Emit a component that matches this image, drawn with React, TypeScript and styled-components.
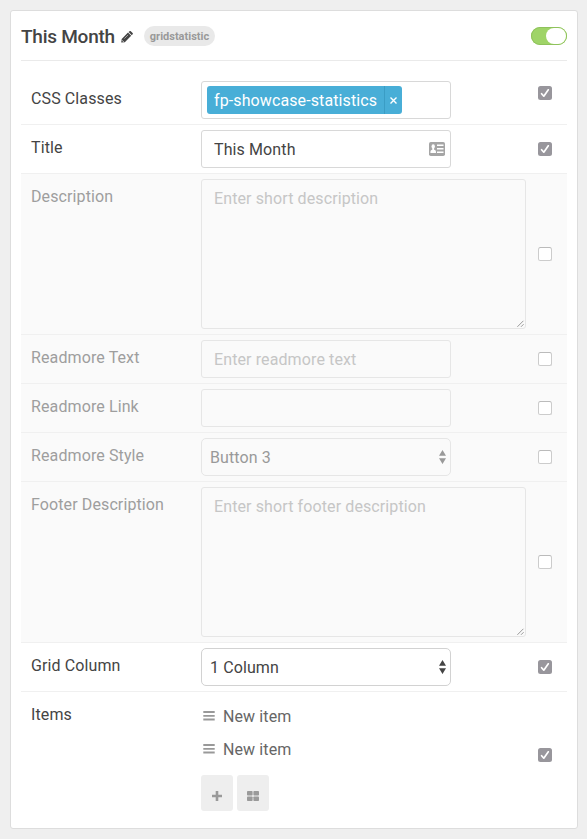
import React from 'react';
import styled, { createGlobalStyle } from 'styled-components';

const Global = createGlobalStyle`
  *, *::before, *::after { box-sizing: border-box; }
  body {
    margin: 0;
    background: #efefef;
    font: 400 16px/24px Roboto, sans-serif;
    letter-spacing: 0.11px;
    color: #444;
  }
  input, textarea, select, button { font: inherit; letter-spacing: inherit; color: inherit; margin: 0; }
`;

const Card = styled.main`
  width: 568px;
  height: 819px;
  margin: 10px;
  padding: 0 10px;
  background: #fff;
  border: 1px solid #ddd;
  border-radius: 3px;
`;

const Header = styled.header`
  display: flex;
  align-items: center;
  height: 50px;
  border-bottom: 1px solid #eaeaea;
`;

const Heading = styled.h1`
  width: 93px;
  margin: 2px 0 0;
  font-size: 19px;
  line-height: 24px;
  font-weight: 500;
  letter-spacing: -0.25px;
  white-space: nowrap;
`;

const Pencil = styled.svg`
  width: 12px;
  height: 12px;
  margin: 3px 0 0 7px;
  fill: #444;
`;

const Badge = styled.span`
  width: 71px;
  height: 20px;
  margin-left: 11px;
  border-radius: 10px;
  background: #e9e9e9;
  color: #999;
  text-align: center;
  font-size: 11px;
  line-height: 21px;
  font-weight: 700;
  letter-spacing: 0;
`;

const Toggle = styled.button`
  display: flex;
  justify-content: flex-end;
  width: 36px;
  height: 18px;
  margin-left: auto;
  padding: 1px;
  border: 0;
  border-radius: 9px;
  background: #9fd468;
  box-shadow: inset 0 0 0 1px #8fc25c;
`;

const Knob = styled.span`
  width: 20px;
  height: 16px;
  border-radius: 8px;
  background: #fff;
`;

const Row = styled.div<{ $off?: boolean; $first?: boolean; $last?: boolean }>`
  display: grid;
  grid-template-columns: 170px 1fr 14px;
  align-items: start;
  padding: ${p => (p.$first ? 20 : 5)}px 15px ${p => (p.$last ? 9 : 5)}px 10px;
  border-bottom: ${p => (p.$last ? 0 : '1px solid #f0f0f0')};
  background: ${p => (p.$off ? '#fafafa' : '#fff')};
`;

const Label = styled.label<{ $off?: boolean }>`
  padding-top: 6px;
  color: ${p => (p.$off ? '#9e9e9e' : '#444')};
`;

const CheckCell = styled.div<{ $shift?: number }>`
  display: flex;
  align-self: center;
  margin-top: ${p => p.$shift ?? 0}px;
`;

const Box = styled.span<{ $on?: boolean }>`
  display: flex;
  width: 14px;
  height: 14px;
  border-radius: 2.5px;
  border: ${p => (p.$on ? 0 : '1px solid #ccc')};
  border-top-color: #bbb;
  background: ${p => (p.$on ? '#98969c' : '#fff')};
`;

const Field = styled.input<{ $off?: boolean }>`
  display: block;
  width: 250px;
  height: 38px;
  padding: 0 12px;
  border: 1px solid ${p => (p.$off ? '#e6e6e6' : '#d8d8d8')};
  border-radius: 3px;
  outline: 0;
  background: ${p => (p.$off ? '#fafafa' : '#fff')};
  &::placeholder { color: #c6c6c6; opacity: 1; }
`;

const Over = styled.div<{ $w: number }>`
  position: relative;
  width: ${p => p.$w}px;
`;

const Area = styled.textarea`
  display: block;
  width: 325px;
  height: 150px;
  padding: 7px 12px;
  border: 1px solid #e6e6e6;
  border-radius: 3px;
  background: #fafafa;
  resize: none;
  outline: 0;
  &::placeholder { color: #c6c6c6; opacity: 1; }
`;

const Grip = styled.svg`
  position: absolute;
  right: 1px;
  bottom: 1px;
  width: 8px;
  height: 8px;
  fill: none;
  stroke: #999;
`;

const CardIcon = styled.svg`
  position: absolute;
  right: 6px;
  top: 12px;
  width: 16px;
  height: 14px;
`;

const TagField = styled.div`
  display: flex;
  width: 250px;
  height: 38px;
  padding: 4px 5px;
  border: 1px solid #d8d8d8;
  border-radius: 3px;
`;

const Tag = styled.span`
  display: flex;
  width: 195px;
  height: 28px;
  border-radius: 3px;
  background: #48aed7;
  color: #fff;
  line-height: 29px;
`;

const TagText = styled.span`
  width: 177px;
  padding-left: 7px;
  white-space: nowrap;
`;

const TagClose = styled.span`
  display: flex;
  align-items: center;
  justify-content: center;
  flex: 1;
  padding-top: 1px;
  border-left: 1px solid #3a9dc5;
`;

const Select = styled.select<{ $off?: boolean }>`
  display: block;
  appearance: none;
  width: 250px;
  height: 38px;
  padding: 1px 8px 0;
  border: 1px solid ${p => (p.$off ? '#e6e6e6' : '#d2d2d2')};
  border-radius: 5px;
  outline: 0;
  background: ${p => (p.$off ? '#fafafa' : '#fff')};
  color: ${p => (p.$off ? '#999' : '#444')};
`;

const Arrows = styled.svg<{ $off?: boolean }>`
  position: absolute;
  right: 5px;
  top: 12px;
  width: 7px;
  height: 14px;
  fill: ${p => (p.$off ? '#999' : '#444')};
`;

const Items = styled.ul`
  margin: 0;
  padding: 8px 0 0;
  list-style: none;
`;

const Item = styled.li`
  display: flex;
  align-items: center;
  height: 24px;
  margin-bottom: 9px;
  padding-left: 2px;
  color: #666;
`;

const Bars = styled.svg`
  width: 12px;
  height: 10px;
  margin: -2px 8px 0 0;
  fill: #999;
`;

const Buttons = styled.div`
  display: flex;
  gap: 4px;
  margin-top: 4px;
  padding-top: 4px;
`;

const IconButton = styled.button`
  width: 32px;
  height: 36px;
  padding: 6px 0 0;
  border: 0;
  border-radius: 3px;
  background: #eee;
  display: flex;
  align-items: center;
  justify-content: center;
  svg { fill: #9a9a9a; display: block; }
`;

const Check = ({ on, shift }: { on?: boolean; shift?: number }) => (
  <CheckCell $shift={shift}>
    <Box $on={on} role="checkbox" aria-checked={!!on}>
      {on && (
        <svg width="14" height="14" viewBox="0 0 14 14" fill="none" stroke="#fff" strokeWidth="1.7" strokeLinecap="round" strokeLinejoin="round">
          <path d="M3.6 7.7 5.8 10.2 10.3 3.8" />
        </svg>
      )}
    </Box>
  </CheckCell>
);

const SelectField = ({ value, off }: { value: string; off?: boolean }) => (
  <Over $w={250}>
    <Select $off={off} defaultValue={value}><option>{value}</option></Select>
    <Arrows $off={off} viewBox="0 0 7 14"><path d="M3.5 0 7 5.7H0zM0 8.3h7L3.5 14z" /></Arrows>
  </Over>
);

const AreaField = ({ hint }: { hint: string }) => (
  <Over $w={325}>
    <Area placeholder={hint} />
    <Grip viewBox="0 0 8 8"><path d="M.4 6.8 6.4.8M4 6.8l2.6-2.6" /></Grip>
  </Over>
);

const DragBars = () => (
  <Bars viewBox="0 0 12 10"><path d="M.3 0h11.4v2H.3zM.3 3.9h11.4v1.8H.3zM.3 7.5h11.4v1.9H.3z" /></Bars>
);

export default function App() {
  return (
    <>
      <Global />
      <Card>
        <Header>
          <Heading>This Month</Heading>
          <Pencil viewBox="0 0 12 12">
            <path d="M7 1.6 10.2 4.8 3.8 11.2.2 11.6.7 7.9zM7.6 1 8.5.2q.7-.5 1.3 0l1.8 1.8q.6.7 0 1.3l-.8.9z" />
            <path d="M3.4 7.6 7.1 3.9" stroke="#fff" strokeWidth=".5" />
            <path d="M1.2 9.4l1.4 1.4" stroke="#fff" strokeWidth=".9" />
          </Pencil>
          <Badge>gridstatistic</Badge>
          <Toggle aria-label="Enabled"><Knob /></Toggle>
        </Header>
        <Row $first>
          <Label>CSS Classes</Label>
          <TagField>
            <Tag>
              <TagText>fp-showcase-statistics</TagText>
              <TagClose>
                <svg width="7" height="7" viewBox="0 0 7 7" stroke="#fff" strokeWidth="1.4"><path d="M.5.5l6 6M6.5.5l-6 6" /></svg>
              </TagClose>
            </Tag>
          </TagField>
          <Check on shift={-15} />
        </Row>
        <Row>
          <Label>Title</Label>
          <Over $w={250}>
            <Field defaultValue="This Month" />
            <CardIcon viewBox="0 0 16 14">
              <rect width="16" height="14" rx="1.8" fill="#a5a5a5" />
              <g fill="#fff">
                <ellipse cx="4.2" cy="4.5" rx="1.7" ry="2.3" />
                <path d="M3.4 5.5H5v2l1.6 1.1q.4.4.4 2.4H1.4q0-2 .4-2.4l1.6-1.1zM8 2.5h6.5v1.4H8zM8 6h6.5v1.4H8zM8 9.5h6.5v1.4H8z" />
              </g>
            </CardIcon>
          </Over>
          <Check on />
        </Row>
        <Row $off><Label $off>Description</Label><AreaField hint="Enter short description" /><Check /></Row>
        <Row $off><Label $off>Readmore Text</Label><Field $off placeholder="Enter readmore text" /><Check /></Row>
        <Row $off><Label $off>Readmore Link</Label><Field $off /><Check /></Row>
        <Row $off><Label $off>Readmore Style</Label><SelectField off value="Button 3" /><Check /></Row>
        <Row $off><Label $off>Footer Description</Label><AreaField hint="Enter short footer description" /><Check /></Row>
        <Row><Label>Grid Column</Label><SelectField value="1 Column" /><Check on /></Row>
        <Row $last>
          <Label>Items</Label>
          <div>
            <Items>
              <Item><DragBars />New item</Item>
              <Item><DragBars />New item</Item>
            </Items>
            <Buttons>
              <IconButton aria-label="Add item">
                <svg width="10" height="10" viewBox="0 0 10 10"><path d="M3.7 0h2.6v3.7H10v2.6H6.3V10H3.7V6.3H0V3.7h3.7z" /></svg>
              </IconButton>
              <IconButton aria-label="Grid view">
                <svg width="12" height="10" viewBox="0 0 12 10"><rect width="5.6" height="4.6" rx=".8" /><rect x="6.4" width="5.6" height="4.6" rx=".8" /><rect y="5.4" width="5.6" height="4.6" rx=".8" /><rect x="6.4" y="5.4" width="5.6" height="4.6" rx=".8" /></svg>
              </IconButton>
            </Buttons>
          </div>
          <Check on shift={2} />
        </Row>
      </Card>
    </>
  );
}
